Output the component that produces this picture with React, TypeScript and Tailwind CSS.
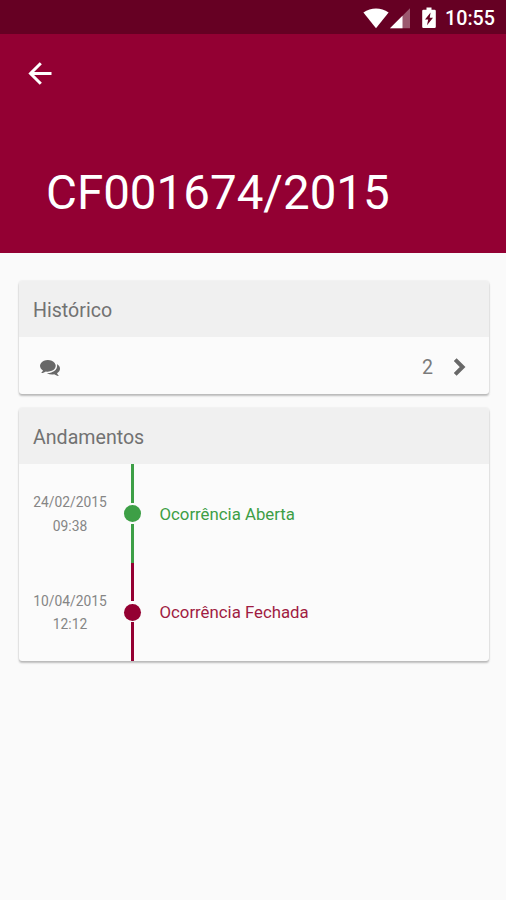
import React from "react";

interface Andamento {
  date: string;
  time: string;
  label: string;
  textColor: string;
  fillColor: string;
}

const andamentos: Andamento[] = [
  {
    date: "24/02/2015",
    time: "09:38",
    label: "Ocorrência Aberta",
    textColor: "text-[#3d9e45]",
    fillColor: "bg-[#3d9f46]",
  },
  {
    date: "10/04/2015",
    time: "12:12",
    label: "Ocorrência Fechada",
    textColor: "text-[#a01c42]",
    fillColor: "bg-[#940032]",
  },
];

const StatusBar: React.FC = () => (
  <div className="h-[34px] bg-[#660023] flex items-center justify-end pr-[11px] pt-[2px] text-white">
    <svg width="26" height="21" viewBox="0 0 26 21" fill="currentColor">
      <path d="M0.4 4.6C8 -0.8 18 -0.8 25.6 4.6L13 20.2Z" />
    </svg>
    <svg className="ml-[1px]" width="21" height="21" viewBox="0 0 21 21" fill="currentColor">
      <path d="M0 20.2L20 0.3V20.2Z" opacity="0.35" />
      <path d="M0 20.2L12.5 7.7V20.2Z" />
    </svg>
    <svg className="ml-[11px]" width="14" height="22" viewBox="0 0 14 22" fill="currentColor">
      <path
        fillRule="evenodd"
        d="M4.5 0.5h5v2.2h3.1q1.2 0 1.2 1.2v15.9q0 1.2-1.2 1.2H1.400q-1.200 0-1.200-1.200V3.900q0-1.200 1.200-1.200h3.100zM8.600 5.400L3 12.600h3.200L5 18.200l6-7.500H7.700z"
      />
    </svg>
    <span className="ml-[9px] pt-[2px] text-[19.7px] leading-none font-medium">10:55</span>
  </div>
);

const Card: React.FC<{ title: string; children: React.ReactNode }> = ({ title, children }) => (
  <section className="rounded-[3px] overflow-hidden bg-[#fbfbfb] shadow-[0_2px_2px_rgba(0,0,0,0.24),0_0_2px_rgba(0,0,0,0.13)]">
    <h2 className="h-[56px] bg-[#f0f0f0] pl-[14px] pt-[4px] flex items-center text-[19.6px] text-[#727272]">
      {title}
    </h2>
    {children}
  </section>
);

const AndamentoRow: React.FC<{ item: Andamento }> = ({ item }) => (
  <div className="h-[98.5px] flex items-center">
    <div className="w-[102px] pt-[3px] text-center text-[13.8px] leading-[23.5px] text-[#858585]">
      <div>{item.date}</div>
      <div>{item.time}</div>
    </div>
    {/* Timeline marker */}
    <div className="w-[23px] h-full flex flex-col items-center">
      <div className={`w-[3px] flex-1 ${item.fillColor}`} />
      <div className={`size-[17px] mt-[2.5px] mb-[1.5px] rounded-full ${item.fillColor}`} />
      <div className={`w-[3px] flex-1 ${item.fillColor}`} />
    </div>
    <div className={`pl-[15.5px] pt-[2px] text-[16.8px] ${item.textColor}`}>{item.label}</div>
  </div>
);

const App: React.FC = () => {
  return (
    <div className="min-h-screen bg-[#fafafa] font-['Roboto',sans-serif]">
      <StatusBar />

      <header className="h-[219px] bg-[#930033] text-white pt-[28px]">
        <button className="block ml-[28px]" aria-label="Voltar">
          <svg width="24" height="24" viewBox="0 0 24 24" fill="none" stroke="currentColor" strokeWidth="3">
            <path d="M23.5 11.500H3M12.800 1.200L2.500 11.500L12.800 21.800" />
          </svg>
        </button>
        <h1 className="ml-[46px] mt-[79px] text-[47.5px] leading-[56px]">CF001674/2015</h1>
      </header>

      <main className="flex flex-col gap-[14px] pt-[28px] pl-[19px] pr-[17px]">
        <Card title="Histórico">
          <div className="h-[57px] flex items-center pl-[21px] pr-[22px] text-[#686868]">
            <svg className="mt-[5px]" width="20" height="16" viewBox="0 0 1792 1408" preserveAspectRatio="none" fill="currentColor">
              <path d="M1408 512q0 139-94 257t-256.500 186.500T704 1024q-86 0-176-16-124 88-278 128-36 9-86 16h-3q-11 0-20.500-8t-11.500-21q-1-3-1-6.500t.5-6.500 2-6l2.500-5 3.500-5.500 4-5 4.500-5 4-4.500q5-6 23-25t26-29.500 22.500-29 25-38.500 20.500-44Q142 846 71 740T0 512q0-139 94-257T350.500 68.500 704 0t353.500 68.500T1314 255t94 257zm384 256q0 120-71 224.500T1526 1169q10 24 20.500 44t25 38.500 22.500 29 26 29.500 23 25q1 1 4 4.500t4.500 5 4 5 3.500 5.500l2.500 5 2 6 .5 6.500-1 6.500q-3 14-13 22t-22 7q-50-7-86-16-154-40-278-128-90 16-176 16-271 0-472-132 58 4 88 4 161 0 309-45t264-129q125-92 192-212t67-254q0-77-23-152 129 71 204 178t75 230z" />
            </svg>
            <span className="ml-auto pt-[4px] text-[19.6px] text-[#7b7b7b]">2</span>
            <svg className="ml-[20px] mr-[1px] mt-[3px]" width="13" height="18" viewBox="0 0 13 18" fill="none" stroke="currentColor" strokeWidth="4">
              <path d="M2.200 1.700L9.600 9L2.200 16.300" />
            </svg>
          </div>
        </Card>

        <Card title="Andamentos">
          {andamentos.map((item) => (
            <AndamentoRow key={item.date} item={item} />
          ))}
        </Card>
      </main>
    </div>
  );
};

export default App;
